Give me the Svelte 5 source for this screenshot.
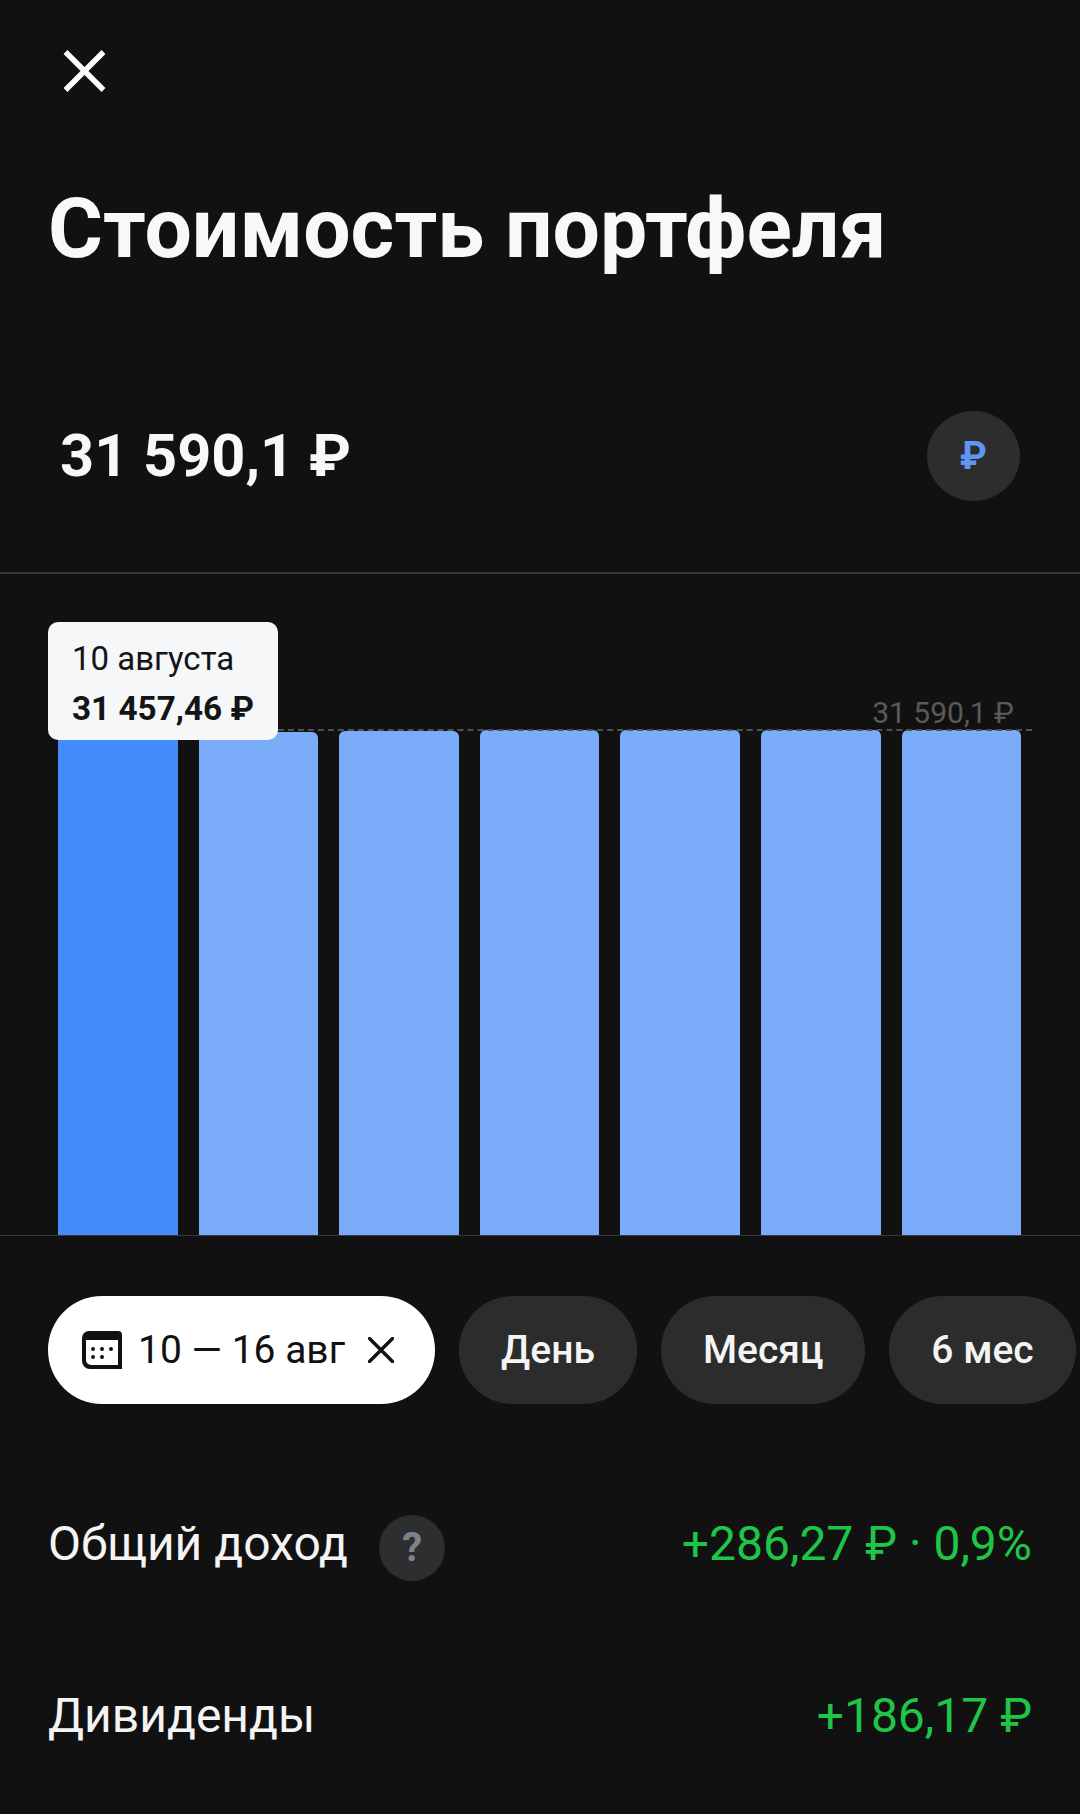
<script>
  const bars = [503, 503, 504, 505, 505, 505, 505];
  const periods = ['День', 'Месяц', '6 мес'];
</script>

<div class="page">
  <button class="close" aria-label="Закрыть">
    <svg width="43" height="42" viewBox="0 0 43 42"><path d="M2.5 2 L40.5 40 M40.5 2 L2.5 40" stroke="#fff" stroke-width="5.5" fill="none"/></svg>
  </button>

  <h1>Стоимость портфеля</h1>

  <div class="amount-row">
    <span class="amount">31 590,1 ₽</span>
    <span class="currency">₽</span>
  </div>

  <section class="chart">
    <div class="bars">
      {#each bars as h, i}
        <div class="bar" class:active={i === 0} style="height:{h}px"></div>
      {/each}
    </div>
    <div class="dash"></div>
    <div class="max-label">31 590,1 ₽</div>
    <div class="tip">
      <div class="tip-date">10 августа</div>
      <div class="tip-value">31 457,46 ₽</div>
    </div>
  </section>

  <div class="pills">
    <div class="pill selected">
      <svg class="cal" width="40" height="38" viewBox="0 0 40 38">
        <path fill-rule="evenodd" fill="#111" d="M7 0H36a4 4 0 0 1 4 4V38H8a8 8 0 0 1-8-8V7a7 7 0 0 1 7-7ZM4 9V29a5 5 0 0 0 5 5H36V9Z"/>
        <g fill="#111">
          <circle cx="11" cy="18" r="2"/><circle cx="20" cy="18" r="2"/><circle cx="29" cy="18" r="2"/>
          <circle cx="11" cy="26" r="2"/><circle cx="20" cy="26" r="2"/>
        </g>
      </svg>
      <span>10 — 16 авг</span>
      <svg class="x" width="26" height="26" viewBox="0 0 26 26"><path d="M1.5 1.5 L24.5 24.5 M24.5 1.5 L1.5 24.5" stroke="#111" stroke-width="3.4" stroke-linecap="round" fill="none"/></svg>
    </div>
    {#each periods as p}
      <div class="pill">{p}</div>
    {/each}
  </div>

  <div class="row first">
    <div class="label">Общий доход <span class="help">?</span></div>
    <div class="value">+286,27 ₽ · 0,9%</div>
  </div>
  <div class="row second">
    <div class="label">Дивиденды</div>
    <div class="value">+186,17 ₽</div>
  </div>
</div>

<style>
  :global(body) { margin: 0; background: #111112; }
  .page {
    width: 1080px; height: 1814px; overflow: hidden; background: #111112;
    font-family: Roboto, "Noto Sans", sans-serif; color: #fff;
  }
  .close { display: block; background: none; border: 0; padding: 50px 0 0 63px; height: 92px; line-height: 0; }
  h1 { margin: 87px 0 0; padding-left: 48px; font-size: 84px; line-height: 100px; font-weight: 700; color: #f7f8f8; white-space: nowrap; }
  .amount-row { display: flex; align-items: center; justify-content: space-between; margin-top: 132px; padding: 0 60px; height: 90px; }
  .amount { font-size: 59.5px; line-height: 90px; font-weight: 700; color: #f7f8f8; }
  .currency {
    width: 93px; height: 90px; border-radius: 50%; background: #2d2d2e; color: #5f96f2;
    display: flex; align-items: center; justify-content: center;
    font-size: 38px; font-weight: 700;
  }
  .chart {
    position: relative; height: 661px; margin-top: 71px;
    border-top: 2px solid #39393a; border-bottom: 1px solid #39393b;
  }
  .bars { position: absolute; left: 58px; bottom: 0; display: flex; align-items: flex-end; gap: 21px; }
  .bar { width: 119.6px; background: #7bacfa; border-radius: 6px 6px 0 0; }
  .bar.active { background: #448cfc; }
  .dash { position: absolute; left: 278px; width: 754px; top: 155px; border-top: 2px dashed #505050; }
  .max-label { position: absolute; right: 66px; top: 121px; font-size: 30px; line-height: 36px; color: #5a5a5a; }
  .tip {
    position: absolute; left: 48px; top: 48px; width: 230px; height: 118px; box-sizing: border-box;
    padding: 14px 0 0 24px; background: #f6f7f8; border-radius: 10px; color: #141415;
  }
  .tip-date { font-size: 33px; line-height: 46px; }
  .tip-value { font-size: 33.3px; line-height: 46px; font-weight: 700; margin-top: 4px; white-space: nowrap; }
  .pills { display: flex; gap: 24px; margin-top: 60px; padding-left: 48px; height: 108px; width: 1200px; }
  .pill {
    height: 108px; border-radius: 54px; background: #2c2c2d; color: #f4f4f4;
    display: flex; align-items: center; padding: 0 42px; font-size: 39px; font-weight: 500; white-space: nowrap;
  }
  .pill.selected { background: #fff; color: #111; padding: 0 41px 0 34px; font-weight: 450; }
  .cal { margin-right: 16px; }
  .x { margin-left: 23px; }
  .row { display: flex; align-items: flex-start; justify-content: space-between; padding: 0 48px; height: 66px; font-size: 48px; line-height: 58px; }
  .row.first { margin-top: 111px; }
  .row.second { margin-top: 106px; }
  .label { display: flex; align-items: flex-start; color: #f4f4f4; white-space: nowrap; }
  .help {
    margin-left: 31px; width: 66px; height: 66px; border-radius: 50%; background: #2d2e2f; color: #7f818c;
    display: flex; align-items: center; justify-content: center; font-size: 40px; line-height: 66px; font-weight: 700;
  }
  .value { color: #1fc546; white-space: nowrap; }
</style>
